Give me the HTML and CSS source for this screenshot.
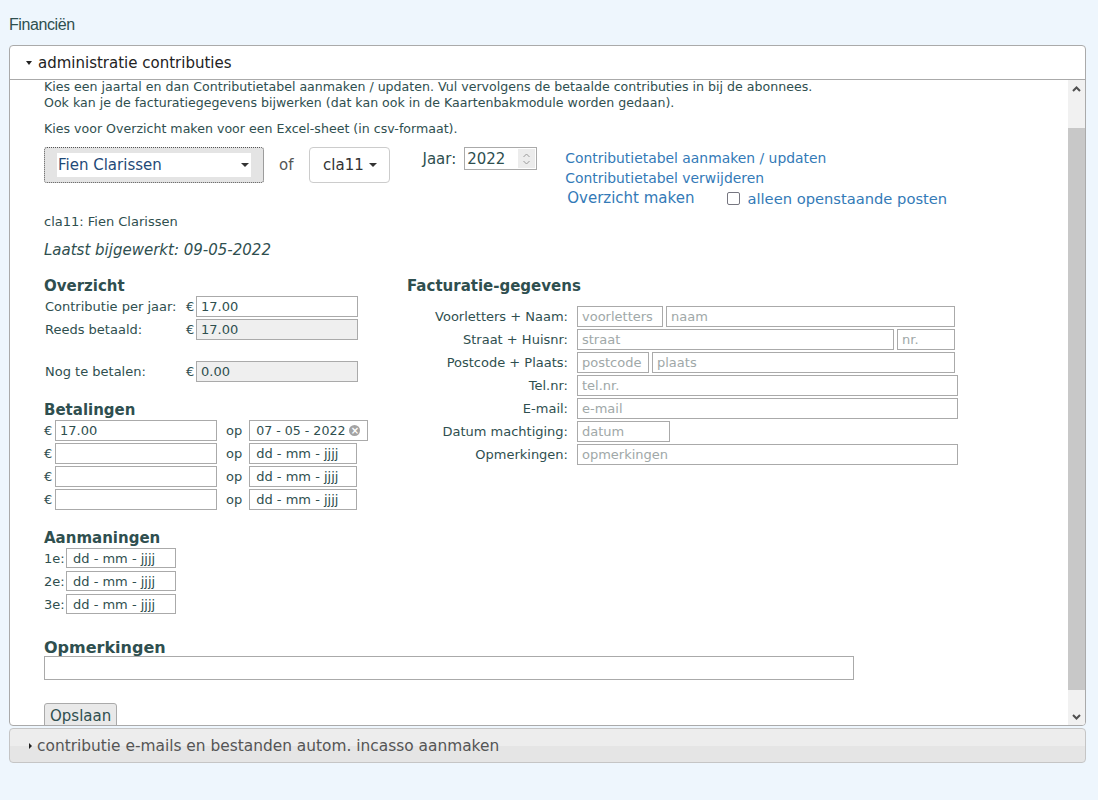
FILE: index.html
```html
<!DOCTYPE html>
<html lang="nl">
<head>
  <meta charset="UTF-8">
  <title>Financiën</title>
  <link rel="stylesheet" href="styles.css">
</head>
<body>
  <h1 class="page-title">Financiën</h1>

  <!-- administratie contributies (open) -->
  <div class="acc-panel">
    <div class="acc-head"><span class="tri-down"></span>administratie contributies</div>
    <div class="acc-body">
      <div class="acc-content">
        <p class="intro">Kies een jaartal en dan Contributietabel aanmaken / updaten. Vul vervolgens de betaalde contributies in bij de abonnees.<br>Ook kan je de facturatiegegevens bijwerken (dat kan ook in de Kaartenbakmodule worden gedaan).</p>
        <p class="intro">Kies voor Overzicht maken voor een Excel-sheet (in csv-formaat).</p>

        <div class="toolbar">
          <div class="member-select">
            <span class="member-select-inner">Fien Clarissen<span class="tri-small"></span></span>
          </div>
          <span class="of">of</span>
          <div class="code-btn">cla11<span class="tri-small"></span></div>
          <div class="year">
            <span class="year-label">Jaar:</span>
            <span class="num-box">2022<span class="spin">
              <svg width="9" height="14" viewBox="0 0 9 14"><polyline points="1.5,5 4.5,2 7.5,5" fill="none" stroke="#9a9a9a" stroke-width="1"/><polyline points="1.5,9 4.5,12 7.5,9" fill="none" stroke="#9a9a9a" stroke-width="1"/></svg>
            </span></span>
          </div>
          <div class="actions">
            <a href="#">Contributietabel aanmaken / updaten</a>
            <a href="#">Contributietabel verwijderen</a>
            <div class="overzicht-row">
              <a href="#" class="big-link">Overzicht maken</a>
              <span class="check-label"><span class="check"></span>alleen openstaande posten</span>
            </div>
          </div>
        </div>

        <p class="member">cla11: Fien Clarissen</p>
        <p class="updated">Laatst bijgewerkt: 09-05-2022</p>

        <div class="columns">
          <div class="col-left">
            <h3>Overzicht</h3>
            <div class="sum-row">
              <span class="sum-label">Contributie per jaar:</span><span class="eur">€</span><input class="field w162" value="17.00">
            </div>
            <div class="sum-row">
              <span class="sum-label">Reeds betaald:</span><span class="eur">€</span><input class="field w162 ro" value="17.00" readonly>
            </div>
            <div class="sum-row spaced">
              <span class="sum-label">Nog te betalen:</span><span class="eur">€</span><input class="field w162 ro" value="0.00" readonly>
            </div>

            <h3 class="sub">Betalingen</h3>
            <div class="pay-row">
              <span class="eur-l">€</span><input class="field w162" value="17.00"><span class="op">op</span>
              <span class="field date filled">07 - 05 - 2022<span class="clear">×</span></span>
            </div>
            <div class="pay-row">
              <span class="eur-l">€</span><input class="field w162"><span class="op">op</span>
              <span class="field date">dd - mm - jjjj</span>
            </div>
            <div class="pay-row">
              <span class="eur-l">€</span><input class="field w162"><span class="op">op</span>
              <span class="field date">dd - mm - jjjj</span>
            </div>
            <div class="pay-row">
              <span class="eur-l">€</span><input class="field w162"><span class="op">op</span>
              <span class="field date">dd - mm - jjjj</span>
            </div>

            <h3 class="sub">Aanmaningen</h3>
            <div class="remind-row"><span class="nr">1e:</span><span class="field date short">dd - mm - jjjj</span></div>
            <div class="remind-row"><span class="nr">2e:</span><span class="field date short">dd - mm - jjjj</span></div>
            <div class="remind-row"><span class="nr">3e:</span><span class="field date short">dd - mm - jjjj</span></div>
          </div>

          <div class="col-right">
            <h3>Facturatie-gegevens</h3>
            <div class="bill-grid">
              <span class="bill-label">Voorletters + Naam:</span>
              <span class="bill-fields"><input class="field" style="width:86px" placeholder="voorletters"><input class="field" style="width:289px" placeholder="naam"></span>
              <span class="bill-label">Straat + Huisnr:</span>
              <span class="bill-fields"><input class="field" style="width:317px" placeholder="straat"><input class="field" style="width:58px" placeholder="nr."></span>
              <span class="bill-label">Postcode + Plaats:</span>
              <span class="bill-fields"><input class="field" style="width:72px" placeholder="postcode"><input class="field" style="width:303px" placeholder="plaats"></span>
              <span class="bill-label">Tel.nr:</span>
              <span class="bill-fields"><input class="field" style="width:381px" placeholder="tel.nr."></span>
              <span class="bill-label">E-mail:</span>
              <span class="bill-fields"><input class="field" style="width:381px" placeholder="e-mail"></span>
              <span class="bill-label">Datum machtiging:</span>
              <span class="bill-fields"><input class="field" style="width:93px" placeholder="datum"></span>
              <span class="bill-label">Opmerkingen:</span>
              <span class="bill-fields"><input class="field" style="width:381px" placeholder="opmerkingen"></span>
            </div>
          </div>
        </div>

        <h3 class="notes-title">Opmerkingen</h3>
        <input class="field notes">
        <button class="save-btn">Opslaan</button>
      </div>

      <!-- scrollbalk -->
      <div class="scrollbar">
        <span class="sb-arrow"><svg width="9" height="6" viewBox="0 0 9 6"><polyline points="1,5 4.5,1.5 8,5" fill="none" stroke="#505050" stroke-width="2"/></svg></span>
        <span class="sb-gap-top"></span>
        <span class="sb-thumb"></span>
        <span class="sb-gap-bottom"></span>
        <span class="sb-arrow"><svg width="9" height="6" viewBox="0 0 9 6"><polyline points="1,1 4.5,4.5 8,1" fill="none" stroke="#505050" stroke-width="2"/></svg></span>
      </div>
    </div>
  </div>

  <!-- e-mails en incasso (dicht) -->
  <div class="acc-panel closed">
    <div class="acc-head"><span class="tri-right"></span>contributie e-mails en bestanden autom. incasso aanmaken</div>
  </div>
</body>
</html>
```

FILE: styles.css
```css
/* ----- algemeen ----- */
body {
  margin: 0;
  padding: 0 12px 0 9px;
  background: #eef6fd;
  font-family: "DejaVu Sans", Verdana, sans-serif;
  font-size: 13px;
  color: #2f4f4f;
}

.page-title {
  margin: 15px 0 10px;
  font-family: "Liberation Sans", Arial, sans-serif;
  font-size: 16px;
  font-weight: normal;
  letter-spacing: -0.4px;
  line-height: 20px;
  color: #2f4f4f;
}

/* ----- accordeon ----- */
.acc-panel {
  border: 1px solid #aaa;
  border-radius: 4px;
  background: #fff;
  overflow: hidden;
}

.acc-head {
  height: 33px;
  display: flex;
  align-items: center;
  padding-left: 15px;
  border-bottom: 1px solid #aaa;
  font-size: 15px;
  color: #222;
}

.acc-panel.closed {
  margin-top: 2px;
  border-color: #c5c5c5;
  background: linear-gradient(#ededed 50%, #e5e5e5 50%);
}

.acc-panel.closed .acc-head {
  border-bottom: none;
  font-size: 15.4px;
  color: #555;
}

.tri-down {
  width: 0;
  height: 0;
  margin: 0 6px 0 1px;
  border-left: 3px solid transparent;
  border-right: 3px solid transparent;
  border-top: 4px solid #222;
}

.tri-right {
  width: 0;
  height: 0;
  margin: 0 5px 0 4px;
  border-top: 3px solid transparent;
  border-bottom: 3px solid transparent;
  border-left: 3px solid #222;
}

.acc-body {
  height: 645px;
  display: flex;
}

.acc-content {
  flex: 1;
  overflow: hidden;
  padding-left: 34px;
}

/* ----- scrollbalk ----- */
.scrollbar {
  width: 17px;
  background: #f1f1f1;
  display: flex;
  flex-direction: column;
}

.sb-arrow {
  height: 17px;
  display: flex;
  align-items: center;
  justify-content: center;
}

.sb-gap-top { height: 31px; }
.sb-thumb { height: 562px; background: #c8c8c8; }
.sb-gap-bottom { flex: 1; }

/* ----- teksten ----- */
.intro {
  margin: -1px 0 0;
  font-size: 12.6px;
  line-height: 16px;
}

.intro + .intro {
  margin-top: 10px;
}

.member {
  margin: 6px 0 0;
  line-height: 16px;
}

.updated {
  margin: 10px 0 0;
  font-size: 15px;
  font-style: italic;
  line-height: 20px;
}

h3 {
  margin: 0;
  font-size: 15px;
  line-height: 18px;
}

/* ----- werkbalk ----- */
.toolbar {
  display: flex;
  align-items: flex-start;
  margin-top: 10px;
}

.member-select {
  width: 220px;
  height: 36px;
  box-sizing: border-box;
  padding: 5px 12px;
  background: #e4e4e4;
  border: 1px dotted #555;
  border-radius: 3px;
}

.member-select-inner {
  display: flex;
  align-items: center;
  justify-content: space-between;
  height: 24px;
  padding: 0 2px 0 1px;
  background: #fff;
  font-size: 15px;
  color: #1f4a78;
}

.tri-small {
  width: 0;
  height: 0;
  margin-left: 5px;
  border-left: 4px solid transparent;
  border-right: 4px solid transparent;
  border-top: 4px solid #333;
}

.of {
  margin: 0 16px 0 15px;
  line-height: 36px;
  font-size: 15px;
  color: #555;
}

.code-btn {
  width: 81px;
  height: 36px;
  box-sizing: border-box;
  display: flex;
  align-items: center;
  justify-content: center;
  border: 1px solid #ccc;
  border-radius: 4px;
  font-size: 15px;
  color: #333;
}

.year {
  display: flex;
  align-items: center;
  margin-left: 32px;
  height: 23px;
}

.year-label {
  margin-right: 8px;
  font-size: 15px;
}

.num-box {
  width: 73px;
  height: 23px;
  box-sizing: border-box;
  display: flex;
  align-items: center;
  justify-content: space-between;
  padding: 0 1px 0 2px;
  border: 1px solid #aaa;
  font-size: 15px;
}

.spin {
  width: 17px;
  height: 19px;
  display: flex;
  align-items: center;
  justify-content: center;
  background: #ececec;
}

.actions {
  display: flex;
  flex-direction: column;
  margin: 1px 0 0 28px;
}

.actions a {
  line-height: 20px;
  font-size: 13.9px;
  color: #337ab7;
  text-decoration: none;
}

.overzicht-row {
  display: flex;
  align-items: center;
}

.actions .big-link {
  margin-left: 2px;
  font-size: 15px;
}

.check-label {
  display: flex;
  align-items: center;
  margin-left: 33px;
  font-size: 14.7px;
  color: #337ab7;
}

.check {
  width: 11px;
  height: 11px;
  margin-right: 7px;
  border: 1px solid #767680;
  border-radius: 2px;
}

/* ----- kolommen ----- */
.columns {
  display: flex;
  margin-top: 17px;
}

.col-left {
  width: 363px;
}

.col-left h3 {
  margin-bottom: 1px;
}

.col-left h3.sub {
  margin-top: 19px;
}

.field {
  height: 21px;
  box-sizing: border-box;
  margin: 0;
  padding: 0 4px;
  border: 1px solid #aaa;
  border-radius: 0;
  background: #fff;
  font-family: "DejaVu Sans", Verdana, sans-serif;
  font-size: 13px;
  color: #2f4f4f;
  outline: none;
}

.field::placeholder {
  color: #a0a8a8;
}

.w162 { width: 162px; }
.ro { background: #efefef; }

.sum-row {
  display: flex;
  align-items: center;
  margin-bottom: 2px;
}

.sum-row.spaced {
  margin-top: 21px;
}

.sum-label {
  width: 141px;
  margin-left: 1px;
}

.eur {
  width: 10px;
}

.pay-row {
  display: flex;
  align-items: center;
  margin-bottom: 2px;
}

.eur-l {
  width: 11px;
}

.op {
  margin: 0 7px 0 9px;
}

.date {
  display: flex;
  align-items: center;
  width: 108px;
  padding-left: 6px;
  white-space: nowrap;
}

.date.filled {
  width: 119px;
  padding-right: 2px;
  font-size: 12.6px;
}

.clear {
  display: flex;
  align-items: center;
  justify-content: center;
  width: 11px;
  height: 11px;
  margin-left: 4px;
  border-radius: 50%;
  background: #a3a3a3;
  color: #fff;
  font-size: 10px;
  line-height: 11px;
  font-weight: bold;
}

.remind-row {
  display: flex;
  align-items: center;
  margin-bottom: 3px;
}

.nr {
  width: 22px;
}

.date.short {
  width: 110px;
  height: 20px;
}

/* ----- facturatie ----- */
.bill-grid {
  display: grid;
  grid-template-columns: 161px auto;
  column-gap: 9px;
  row-gap: 2px;
  margin-top: 11px;
  align-items: center;
}

.bill-label {
  text-align: right;
}

.bill-fields {
  display: flex;
  gap: 3px;
}

/* ----- opmerkingen + opslaan ----- */
.notes-title {
  margin-top: 22px;
  font-size: 16px;
  line-height: 17px;
}

.notes {
  display: block;
  width: 810px;
  height: 24px;
}

.save-btn {
  margin-top: 23px;
  padding: 3px 5px;
  border: 1px solid #aaa;
  border-radius: 3px;
  background: #e9e9e9;
  font-family: "DejaVu Sans", Verdana, sans-serif;
  font-size: 15px;
  color: #2f4f4f;
}
```
